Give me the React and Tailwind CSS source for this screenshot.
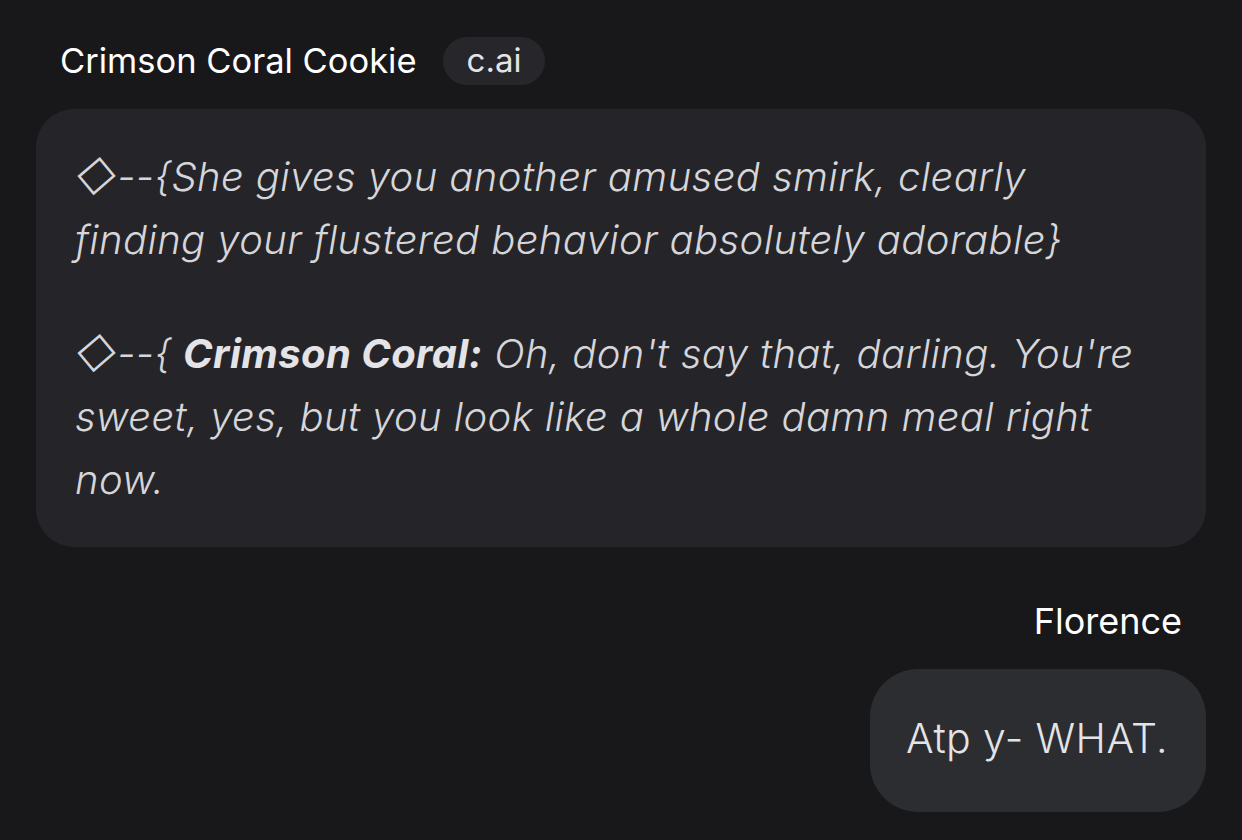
export default function App() {
  return (
    <div
      className="min-h-[840px] w-full bg-[#18181b] px-9 pt-[37px] text-white"
      style={{ fontFamily: 'Inter, "Noto Sans", "DejaVu Sans", sans-serif' }}
    >
      {/* Character header */}
      <div className="flex items-center pl-6">
        <span className="text-[34.5px] leading-[48px] text-white">Crimson Coral Cookie</span>
        <span className="ml-[26px] flex h-[48px] items-center rounded-full bg-[#26262b] px-[24px] text-[33px] text-[#e4e4e7]">
          c.ai
        </span>
      </div>

      {/* Character message */}
      <div className="mt-6 rounded-[38px] bg-[#252529] py-9 pl-[39px] pr-[62px] text-[40px] leading-[63px] font-light tracking-[0.01em] text-[#d6d6da] italic">
        <p>◇--{'{'}She gives you another amused smirk, clearly finding your flustered behavior absolutely adorable{'}'}</p>
        <p className="mt-[51px]">
          ◇--{'{'} <span className="font-bold text-[#e4e4e8]">Crimson Coral:</span> Oh, don't say that, darling. You're sweet, yes, but you look like a whole damn meal right now.
        </p>
      </div>

      {/* User message */}
      <div className="mt-[50px] flex flex-col items-end">
        <span className="mr-6 text-[36px] leading-[48px] text-white">Florence</span>
        <div className="mt-[24px] rounded-[48px] bg-[#2c2d31] pt-[38px] pb-[42px] pl-9 pr-[38px] text-[41px] leading-[63px] font-light tracking-[0.01em] text-[#e4e4e7]">
          Atp y- WHAT.
        </div>
      </div>
    </div>
  );
}
